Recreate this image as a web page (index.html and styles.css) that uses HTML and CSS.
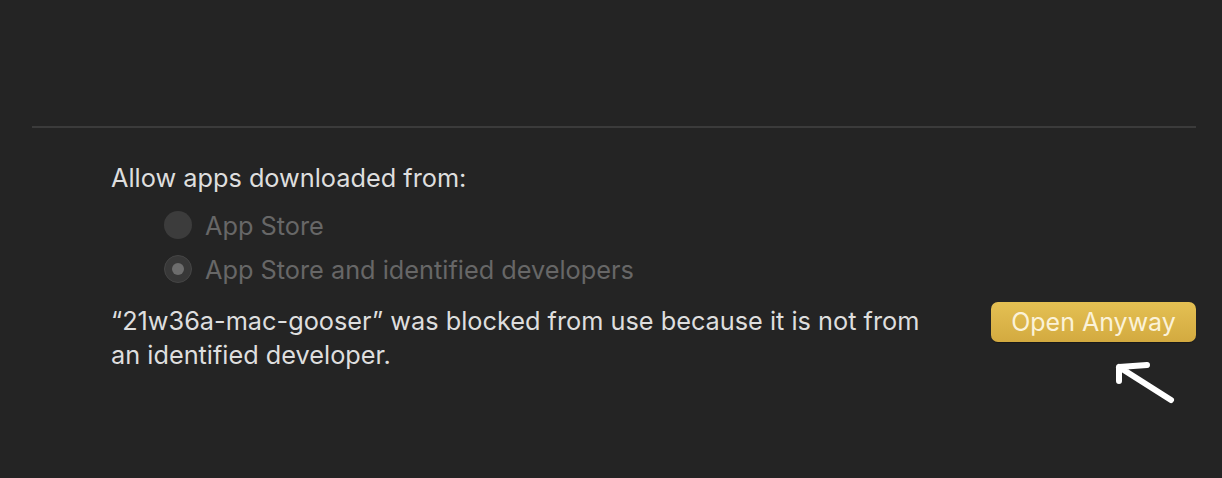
FILE: index.html
```html
<!DOCTYPE html>
<html>
<head>
<meta charset="utf-8">
<link rel="stylesheet" href="styles.css">
</head>
<body>
<div class="pane">
  <div class="top-space"></div>
  <div class="divider"></div>
  <div class="section">
    <div class="heading">Allow apps downloaded from:</div>
    <div class="options">
      <div class="option">
        <span class="radio"></span>
        <span class="label">App Store</span>
      </div>
      <div class="option">
        <span class="radio checked"><span class="dot"></span></span>
        <span class="label">App Store and identified developers</span>
      </div>
    </div>
    <div class="blocked-row">
      <p class="message">“21w36a-mac-gooser” was blocked from use because it is not from an identified developer.</p>
      <div class="button-wrap">
        <button class="open-btn">Open Anyway</button>
        <svg class="arrow" width="70" height="50" viewBox="0 0 70 50">
          <path d="M8 7 L60 40 M8 7 L36 5 M8 7 L8 21" fill="none" stroke="#ffffff" stroke-width="6" stroke-linecap="round" stroke-linejoin="round"/>
        </svg>
      </div>
    </div>
  </div>
</div>
</body>
</html>
```

FILE: styles.css
```css
html, body {
  margin: 0;
  padding: 0;
  background: #242424;
}
body {
  width: 1222px;
  height: 478px;
  overflow: hidden;
  font-family: Inter, "Liberation Sans", sans-serif;
}
.pane {
  display: flex;
  flex-direction: column;
}
.top-space {
  height: 126px;
}
.divider {
  height: 2px;
  background: #3b3b3b;
  margin: 0 26px 0 32px;
}
.section {
  padding: 35px 26px 0 111px;
  display: flex;
  flex-direction: column;
}
.heading {
  font-size: 25.3px;
  line-height: 30px;
  color: #dedede;
}
.options {
  display: flex;
  flex-direction: column;
  gap: 16px;
  margin-top: 18px;
  padding-left: 53px;
}
.option {
  display: flex;
  align-items: center;
  gap: 13px;
  height: 28px;
}
.radio {
  width: 28px;
  height: 28px;
  border-radius: 50%;
  background: #3c3c3c;
  box-sizing: border-box;
  display: flex;
  align-items: center;
  justify-content: center;
}
.radio.checked {
  background: #383838;
  border: 1px solid #454545;
}
.dot {
  width: 12px;
  height: 12px;
  border-radius: 50%;
  background: #6d6d6d;
}
.label {
  font-size: 25.3px;
  color: #676767;
}
.blocked-row {
  display: flex;
  justify-content: space-between;
  align-items: flex-start;
  margin-top: 21px;
}
.message {
  margin: 0;
  width: 830px;
  font-size: 25.3px;
  line-height: 34px;
  color: #dedede;
}
.button-wrap {
  position: relative;
  margin-top: -2px;
}
.open-btn {
  display: block;
  width: 205px;
  height: 40px;
  border: none;
  border-radius: 7px;
  background: linear-gradient(#e4c053, #d3aa40);
  color: #fbf2d8;
  font-family: Inter, "Liberation Sans", sans-serif;
  font-size: 25px;
  padding: 0;
  box-shadow: 0 1px 1px rgba(0,0,0,0.3);
}
.arrow {
  position: absolute;
  left: 120px;
  top: 58px;
}
```
